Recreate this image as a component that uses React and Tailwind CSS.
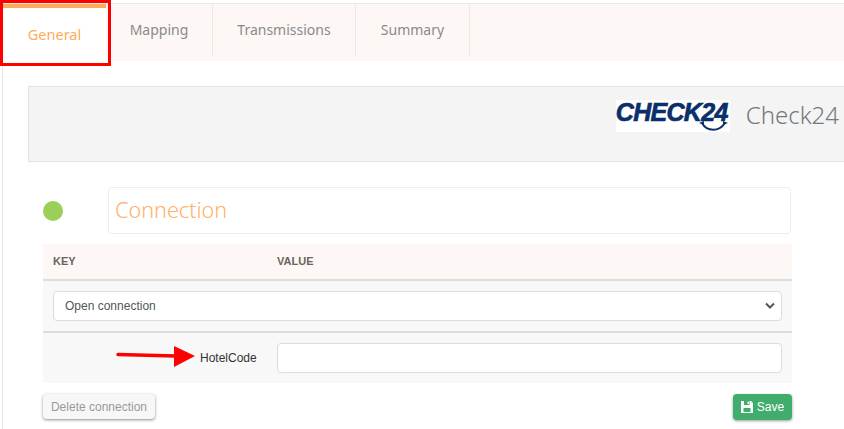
import React from 'react';

const sans = 'font-["Noto_Sans",sans-serif]';
const arial = 'font-["Liberation_Sans",Arial,sans-serif]';

const tabs = [
  { label: 'Mapping', width: 'w-[107px]' },
  { label: 'Transmissions', width: 'w-[143px]' },
  { label: 'Summary', width: 'w-[114px]' },
];

const Logo = () => (
  <div className="relative w-[114px] h-[32px] bg-white">
    <span className={`absolute left-0 top-0 text-[25px] leading-[25px] font-bold italic tracking-[-0.7px] whitespace-nowrap text-[#0b2f6b] [-webkit-text-stroke:0.7px_#0b2f6b] ${arial}`}>
      CHECK24
    </span>
    <svg className="absolute left-[83px] top-[21px]" width="30" height="11" viewBox="0 0 30 11" fill="none">
      <path d="M3 2 C8 11 20 11 26 2" stroke="#0b2f6b" strokeWidth="2" />
      <path d="M0 2 L5 0 L5 4 Z M29 2 L24 0 L24 4 Z" fill="#0b2f6b" />
    </svg>
  </div>
);

const App = () => {
  return (
    <div className="relative w-[844px] h-[429px] overflow-hidden bg-white">
      <div className="ml-[2px] w-[842px] h-[429px] border-l border-t border-[#e8e8e8] mt-[3px]">
        {/* tabs */}
        <div className="flex h-[57px] bg-[#fdf8f5]">
          <div className={`w-[103px] h-[59px] bg-white border-t-[4px] border-[#ffab5c] flex items-center justify-center pb-[2px] text-[14.5px] text-[#ffab5c] ${sans}`}>
            General
          </div>
          {tabs.map((tab) => (
            <div key={tab.label} className={`${tab.width} h-[53px] flex items-center justify-center pb-[3px] border-r border-[#eeeae6] text-[14px] text-[#8a8a8a] ${sans}`}>
              {tab.label}
            </div>
          ))}
        </div>

        {/* provider header */}
        <div className="ml-[25px] mt-[25px] h-[76px] bg-[#f4f4f4] border-y border-l border-[#e2e2e2] flex justify-end pt-[13px] pr-[5px]">
          <div className="flex items-start gap-[16px]">
            <Logo />
            <span className={`mt-[-1px] text-[24px] leading-[32px] font-light text-[#73797f] ${sans}`}>Check24</span>
          </div>
        </div>

        {/* connection */}
        <div className="ml-[40px] w-[749px] mt-[25px]">
          <div className="flex items-center pr-[1px]">
            <div className="w-[20px] h-[20px] rounded-full bg-[#9ccf57]" />
            <div className="ml-[45px] flex-1 h-[47px] flex items-center pl-[6px] bg-white border border-[#eeeeee] rounded-[4px]">
              <span className={`text-[21.6px] font-light text-[#ffb06b] ${sans}`}>Connection</span>
            </div>
          </div>

          <div className="mt-[10px] bg-[#f8f8f8]">
            <div className={`flex items-center h-[37px] pb-[1px] bg-[#fdf8f5] border-b-[2px] border-[#dddddd] text-[11px] font-bold text-[#6b6360] ${arial}`}>
              <span className="ml-[10px] w-[224px]">KEY</span>
              <span>VALUE</span>
            </div>
            <div className="h-[52px] flex items-center justify-center border-b-[2px] border-[#dddddd]">
              <div className={`w-[729px] h-[30px] bg-white border border-[#dcdcdc] rounded-[4px] flex items-center justify-between pl-[11px] pr-[6px] text-[12px] text-[#555555] ${arial}`}>
                Open connection
                <svg width="10" height="8" viewBox="0 0 10 8" fill="none">
                  <path d="M1 1.5 L5 5.5 L9 1.5" stroke="#555555" strokeWidth="2" />
                </svg>
              </div>
            </div>
            <div className="h-[50px] flex items-center">
              <span className={`ml-[157px] w-[77px] text-[12px] text-[#333333] ${arial}`}>HotelCode</span>
              <div className="w-[505px] h-[30px] bg-white border border-[#dcdcdc] rounded-[4px]" />
            </div>
          </div>

          <div className={`mt-[11px] flex items-start justify-between ${arial}`}>
            <button className="w-[112px] h-[25px] rounded-[4px] bg-[#f7f7f7] text-[12px] text-[#9a9a9a] shadow-[0_1px_3px_rgba(0,0,0,0.45)]">
              Delete connection
            </button>
            <button className="w-[59px] h-[26px] rounded-[4px] bg-[#41ad6d] text-[12px] text-white flex items-center justify-center gap-[4px] shadow-[0_1px_3px_rgba(0,0,0,0.4)]">
              <svg width="12" height="12" viewBox="0 0 12 12">
                <path fillRule="evenodd" fill="#ffffff" d="M0 0 H10 L12 2 V12 H0 Z M3 0 V4 H8.5 V0 Z M6.5 .8 V3 H8 V.8 Z M2.5 7 V11 H9.5 V7 Z" />
              </svg>
              Save
            </button>
          </div>
        </div>
      </div>

      {/* annotations */}
      <div className="absolute left-0 top-0 w-[111px] h-[66px] border-[3px] border-[#ff0000]" />
      <svg className="absolute left-[116px] top-[344px]" width="80" height="26" viewBox="0 0 80 26">
        <path d="M2 10.5 L60 12" stroke="#ff0000" strokeWidth="3.5" strokeLinecap="round" />
        <path d="M58 2 L79 12 L58 23 Z" fill="#ff0000" />
      </svg>
    </div>
  );
};

export default App;
